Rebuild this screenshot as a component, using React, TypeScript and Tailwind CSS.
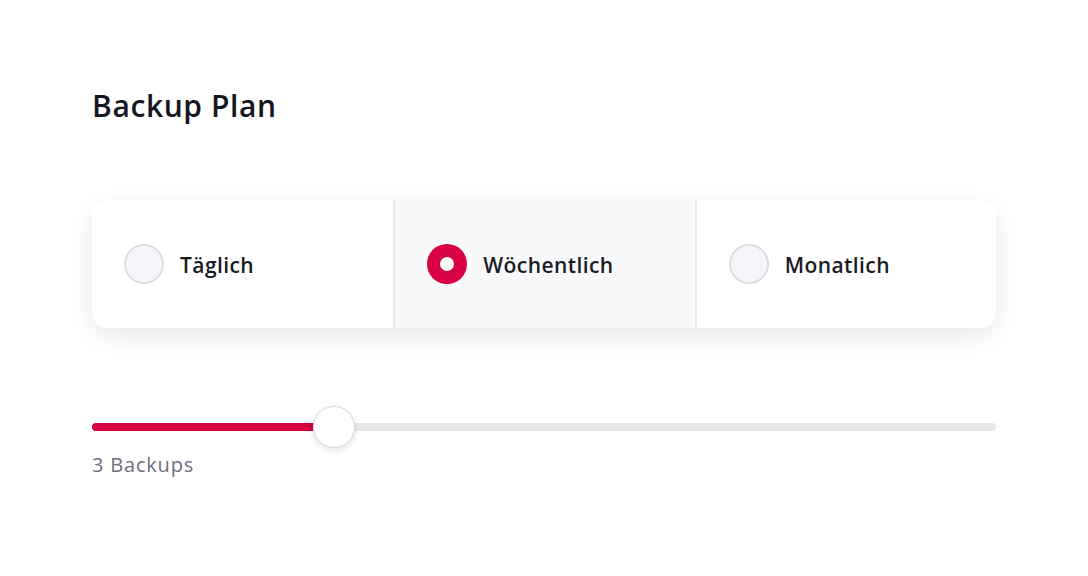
import React, { useState } from "react";

const plans = ["Täglich", "Wöchentlich", "Monatlich"];

const Radio: React.FC<{ checked: boolean }> = ({ checked }) =>
  checked ? (
    <span className="flex h-10 w-10 shrink-0 items-center justify-center rounded-full bg-[#d70040]">
      <span className="h-[14px] w-[14px] rounded-full bg-white" />
    </span>
  ) : (
    <span className="h-10 w-10 shrink-0 rounded-full border-2 border-[#dcdee2] bg-[#f4f6f9]" />
  );

const App: React.FC = () => {
  const [selected, setSelected] = useState(1);
  const backups = 3;
  const percent = 26.8;

  return (
    <div className="min-h-[576px] w-full bg-white px-[92px] pt-[86px] font-['Open_Sans',sans-serif]">
      <h1 className="text-[30px] font-semibold leading-[40px] tracking-[0.02em] text-[#16161f]">
        Backup Plan
      </h1>

      <div className="mt-[74px] grid grid-cols-3 overflow-hidden rounded-2xl bg-white shadow-[0_8px_28px_rgba(0,0,0,0.09)]">
        {plans.map((plan, i) => (
          <button
            key={plan}
            onClick={() => setSelected(i)}
            className={`flex h-[128px] items-center gap-4 px-8 text-left ${
              i > 0 ? "border-l-2 border-[#e8eaed]" : ""
            } ${selected === i ? "bg-[#f7f9fb]" : "bg-white"}`}
          >
            <Radio checked={selected === i} />
            <span className="pt-[3px] text-[21px] font-semibold tracking-[0.02em] text-[#1a1a24]">
              {plan}
            </span>
          </button>
        ))}
      </div>

      <div className="mt-[78px]">
        <div className="relative h-[42px]">
          <div className="absolute left-0 right-0 top-[17px] h-2 rounded-full bg-[#e6e6e8]" />
          <div
            className="absolute left-0 top-[17px] h-2 rounded-full bg-[#d70040]"
            style={{ width: `${percent}%` }}
          />
          <div
            className="absolute top-0 h-[42px] w-[42px] -translate-x-1/2 rounded-full border border-[#d9d9dc] bg-white shadow-[0_2px_6px_rgba(0,0,0,0.12)]"
            style={{ left: `${percent}%` }}
          />
        </div>
        <p className="mt-[3px] text-[20px] leading-7 tracking-[0.04em] text-[#6e6e7c]">
          {backups} Backups
        </p>
      </div>
    </div>
  );
};

export default App;
